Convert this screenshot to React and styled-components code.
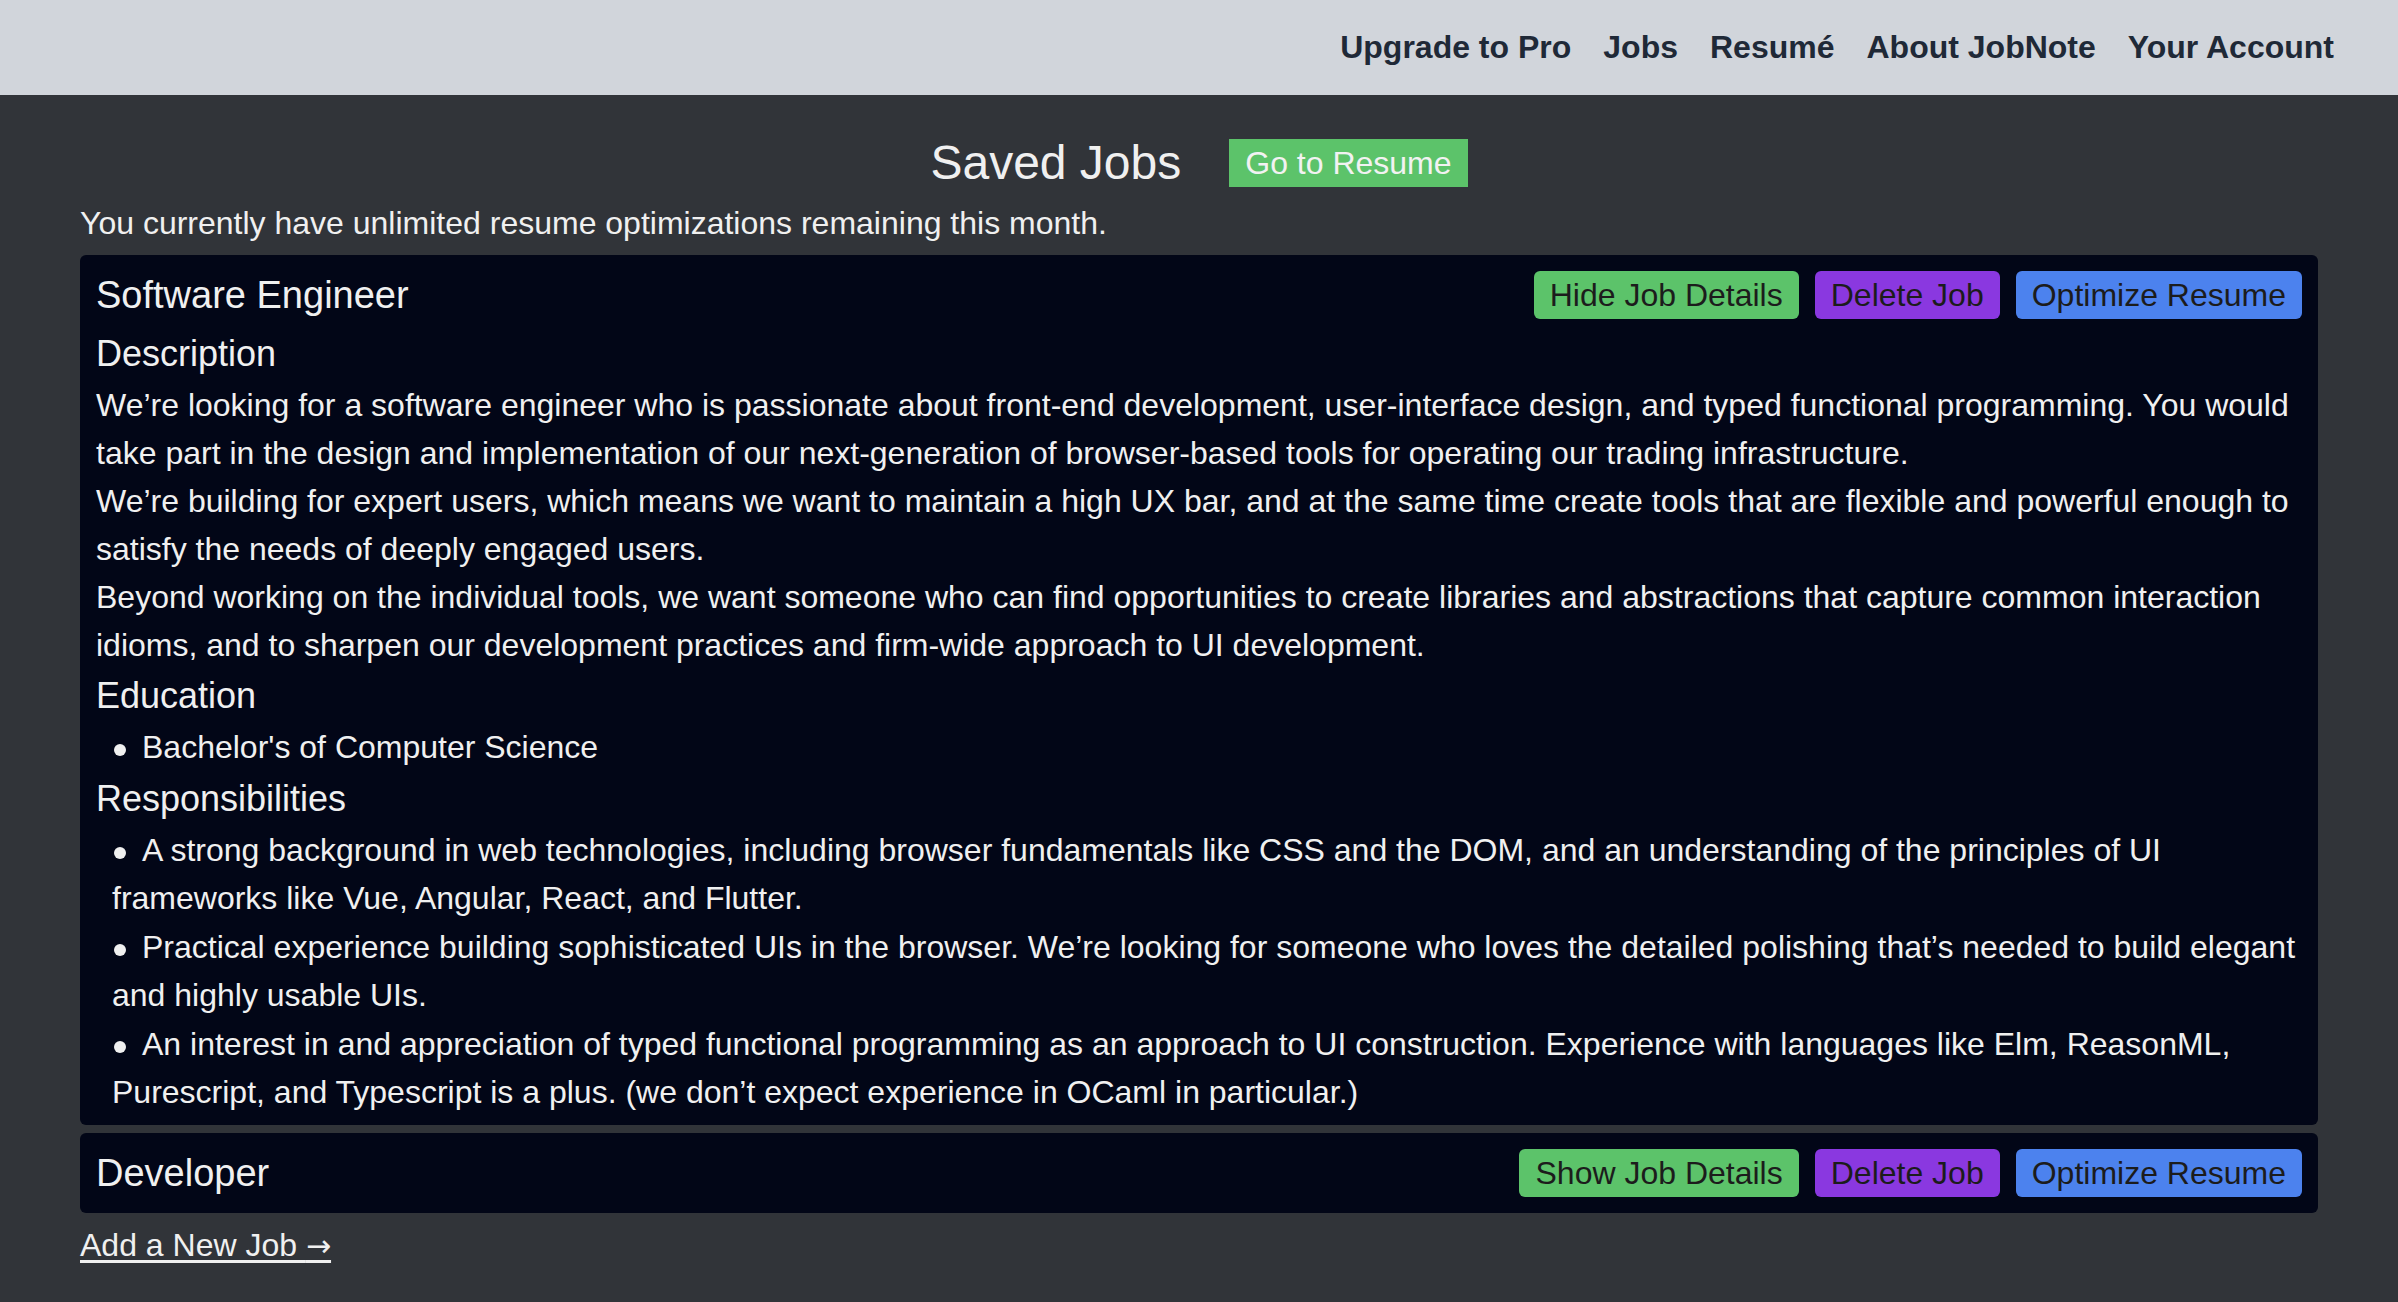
import React, { useState } from 'react';
import styled, { createGlobalStyle } from 'styled-components';

const GlobalStyle = createGlobalStyle`
  html, body {
    margin: 0;
    padding: 0;
    background-color: #313439;
    font-family: "Liberation Sans", Arial, Helvetica, sans-serif;
  }
  * {
    box-sizing: border-box;
  }
`;

const Page = styled.div`
  min-height: 100vh;
  display: flex;
  flex-direction: column;
  background-color: #313439;
`;

const NavBar = styled.nav`
  height: 95px;
  background-color: #d1d5db;
  display: flex;
  justify-content: flex-end;
  align-items: center;
  gap: 32px;
  padding: 0 64px;
`;

const NavLink = styled.a`
  font-size: 32px;
  font-weight: 700;
  color: #1f2937;
  text-decoration: none;
  cursor: pointer;
`;

const Main = styled.main`
  flex: 1;
  padding: 36px 80px 40px;
  color: #f0f0f0;
`;

const TitleRow = styled.div`
  display: flex;
  justify-content: center;
  align-items: center;
  gap: 48px;
  height: 64px;
`;

const PageTitle = styled.h1`
  margin: 0;
  font-size: 48px;
  line-height: 64px;
  font-weight: 400;
  color: #f0f0f0;
`;

const GoButton = styled.button`
  font-family: inherit;
  font-size: 32px;
  line-height: 48px;
  padding: 0 16px;
  border: none;
  border-radius: 0;
  background-color: #5cc36a;
  color: #f2f2f2;
  cursor: pointer;
`;

const Notice = styled.p`
  margin: 4px 0 0;
  font-size: 32px;
  line-height: 48px;
`;

const JobList = styled.div`
  display: flex;
  flex-direction: column;
  gap: 8px;
  margin-top: 8px;
`;

const JobCard = styled.section`
  background-color: #020617;
  border-radius: 6px;
  padding: 16px 16px 8px;
`;

const CardHeader = styled.div`
  display: flex;
  justify-content: space-between;
  align-items: center;
  margin-bottom: 8px;
`;

const JobTitle = styled.h2`
  margin: 0;
  font-size: 38px;
  line-height: 48px;
  font-weight: 400;
`;

const Actions = styled.div`
  display: flex;
  gap: 16px;
`;

const tones = {
  green: '#5cc36a',
  purple: '#8a38e0',
  blue: '#4c82ee',
};

const ActionButton = styled.button`
  font-family: inherit;
  font-size: 32px;
  line-height: 48px;
  padding: 0 16px;
  border: none;
  border-radius: 6px;
  background-color: ${({ $tone }) => tones[$tone]};
  color: #1c1c1c;
  cursor: pointer;
`;

const SectionHeading = styled.h3`
  margin: 0;
  font-size: 36px;
  line-height: 54px;
  font-weight: 400;
`;

const Paragraph = styled.p`
  margin: 0;
  font-size: 32px;
  line-height: 48px;
`;

const BulletList = styled.ul`
  list-style: none;
  margin: 0;
  padding-left: 16px;
`;

const BulletItem = styled.li`
  font-size: 32px;
  line-height: 48px;
  margin-bottom: 1px;

  &::before {
    content: '';
    display: inline-block;
    width: 12px;
    height: 12px;
    border-radius: 50%;
    background-color: #f0f0f0;
    margin: 0 16px 0 2px;
    vertical-align: middle;
  }
`;

const AddLink = styled.a`
  display: inline-block;
  margin-top: 8px;
  font-size: 32px;
  line-height: 48px;
  color: #f0f0f0;
  text-decoration: underline;
  text-underline-offset: 4px;
  cursor: pointer;
`;

const Arrow = styled.span`
  font-family: "DejaVu Sans", sans-serif;
  font-size: 30px;
`;

const jobs = [
  {
    id: 1,
    title: 'Software Engineer',
    description: [
      'We’re looking for a software engineer who is passionate about front-end development, user-interface design, and typed functional programming. You would take part in the design and implementation of our next-generation of browser-based tools for operating our trading infrastructure.',
      'We’re building for expert users, which means we want to maintain a high UX bar, and at the same time create tools that are flexible and powerful enough to satisfy the needs of deeply engaged users.',
      'Beyond working on the individual tools, we want someone who can find opportunities to create libraries and abstractions that capture common interaction idioms, and to sharpen our development practices and firm-wide approach to UI development.',
    ],
    education: ["Bachelor's of Computer Science"],
    responsibilities: [
      'A strong background in web technologies, including browser fundamentals like CSS and the DOM, and an understanding of the principles of UI frameworks like Vue, Angular, React, and Flutter.',
      'Practical experience building sophisticated UIs in the browser. We’re looking for someone who loves the detailed polishing that’s needed to build elegant and highly usable UIs.',
      'An interest in and appreciation of typed functional programming as an approach to UI construction. Experience with languages like Elm, ReasonML, Purescript, and Typescript is a plus. (we don’t expect experience in OCaml in particular.)',
    ],
  },
  {
    id: 2,
    title: 'Developer',
    description: [],
    education: [],
    responsibilities: [],
  },
];

const Job = ({ job, initiallyOpen }) => {
  const [open, setOpen] = useState(initiallyOpen);

  return (
    <JobCard>
      <CardHeader>
        <JobTitle>{job.title}</JobTitle>
        <Actions>
          <ActionButton $tone="green" onClick={() => setOpen(!open)}>
            {open ? 'Hide Job Details' : 'Show Job Details'}
          </ActionButton>
          <ActionButton $tone="purple">Delete Job</ActionButton>
          <ActionButton $tone="blue">Optimize Resume</ActionButton>
        </Actions>
      </CardHeader>
      {open && (
        <div>
          <SectionHeading>Description</SectionHeading>
          {job.description.map((text, i) => (
            <Paragraph key={i}>{text}</Paragraph>
          ))}
          <SectionHeading>Education</SectionHeading>
          <BulletList>
            {job.education.map((item, i) => (
              <BulletItem key={i}>{item}</BulletItem>
            ))}
          </BulletList>
          <SectionHeading>Responsibilities</SectionHeading>
          <BulletList>
            {job.responsibilities.map((item, i) => (
              <BulletItem key={i}>{item}</BulletItem>
            ))}
          </BulletList>
        </div>
      )}
    </JobCard>
  );
};

const App = () => {
  return (
    <Page>
      <GlobalStyle />
      <NavBar>
        <NavLink>Upgrade to Pro</NavLink>
        <NavLink>Jobs</NavLink>
        <NavLink>Resumé</NavLink>
        <NavLink>About JobNote</NavLink>
        <NavLink>Your Account</NavLink>
      </NavBar>
      <Main>
        <TitleRow>
          <PageTitle>Saved Jobs</PageTitle>
          <GoButton>Go to Resume</GoButton>
        </TitleRow>
        <Notice>You currently have unlimited resume optimizations remaining this month.</Notice>
        <JobList>
          {jobs.map((job, i) => (
            <Job key={job.id} job={job} initiallyOpen={i === 0} />
          ))}
        </JobList>
        <AddLink>
          Add a New Job <Arrow>→</Arrow>
        </AddLink>
      </Main>
    </Page>
  );
};

export default App;
